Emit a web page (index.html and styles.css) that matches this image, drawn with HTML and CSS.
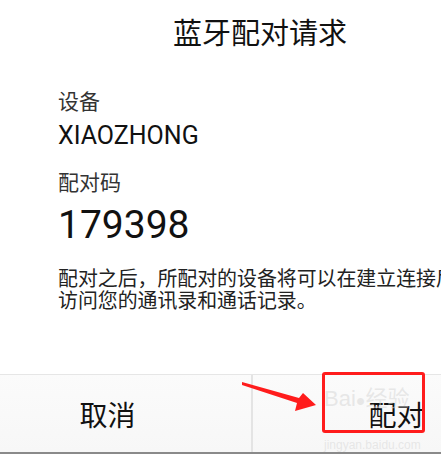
FILE: index.html
```html
<!DOCTYPE html>
<html lang="zh-CN">
<head>
    <meta charset="UTF-8">
    <title>蓝牙配对请求</title>
    <link rel="stylesheet" href="styles.css">
</head>
<body>

<div class="dialog">
    <h2 class="title">蓝牙配对请求</h2>

    <div class="content">
        <p class="label">设备</p>
        <p class="device">XIAOZHONG</p>
        <p class="label code-label">配对码</p>
        <p class="code">179398</p>
        <p class="note">配对之后，所配对的设备将可以在建立连接后<br>访问您的通讯录和通话记录。</p>
    </div>

    <div class="buttons">
        <button class="cancel">取消</button>
        <button class="pair">配对</button>
    </div>
</div>

<!-- annotation on top of the screenshot -->
<div class="mark-box"></div>
<svg class="mark-arrow" width="441" height="454" viewBox="0 0 441 454">
    <polygon points="242,382 299,398 303,393 316,405 295,411 297,403 242,385" fill="#ff1c1c"/>
</svg>
<div class="watermark">
    <span class="wm-logo">Bai<span class="wm-paw">●</span>经验</span>
    <span class="wm-url">jingyan.baidu.com</span>
</div>

</body>
</html>
```

FILE: styles.css
```css
body {
    margin: 0;
    padding: 0;
    background: #fff;
    overflow: hidden;
    font-family: Roboto, "Noto Sans CJK SC", sans-serif;
    color: #111;
}

.dialog {
    width: 576px;
    height: 454px;
    margin-left: -36px;
    display: flex;
    flex-direction: column;
}

.title {
    margin: 0;
    padding: 15px 0 0 16px;
    font-size: 29px;
    font-weight: normal;
    line-height: 38px;
    text-align: center;
    color: #111;
}

.content {
    flex: 1;
    padding: 0 0 0 94px;
}

.content p {
    margin: 0;
    white-space: nowrap;
}

.label {
    margin-top: 35px !important;
    font-size: 21px;
    line-height: 28px;
    color: #333;
}

.code-label {
    margin-top: 17px !important;
}

.device {
    margin-top: 4px !important;
    font-size: 25px;
    line-height: 32px;
}

.code {
    margin-top: 4px !important;
    font-size: 39px;
    line-height: 48px;
}

.note {
    margin-top: 20px !important;
    font-size: 19.9px;
    line-height: 22px;
    color: #222;
}

.buttons {
    display: flex;
    height: 77px;
    border-top: 1px solid #e6e6e6;
    border-bottom: 2px solid #8a8a8a;
    background: linear-gradient(#fbfbfb, #f7f7f7);
}

.buttons button {
    flex: 1;
    border: none;
    background: none;
    font-family: Roboto, "Noto Sans CJK SC", sans-serif;
    font-size: 28px;
    color: #111;
    padding: 0;
}

.buttons button.cancel {
    border-right: 2px solid #e4e4e4;
}

.mark-box {
    position: absolute;
    left: 322px;
    top: 372px;
    width: 97px;
    height: 55px;
    border: 3px solid #ff1c1c;
    border-radius: 3px;
}

.mark-arrow {
    position: absolute;
    left: 0;
    top: 0;
}

.watermark {
    position: absolute;
    left: 324px;
    top: 386px;
    display: flex;
    flex-direction: column;
    color: rgba(215, 215, 215, 0.55);
    font-family: "Liberation Sans", "Noto Sans CJK SC", sans-serif;
}

.wm-logo {
    font-size: 22px;
    line-height: 26px;
}

.wm-paw {
    font-size: 16px;
}

.wm-url {
    margin-top: 24px;
    font-size: 12px;
    line-height: 14px;
}
```
